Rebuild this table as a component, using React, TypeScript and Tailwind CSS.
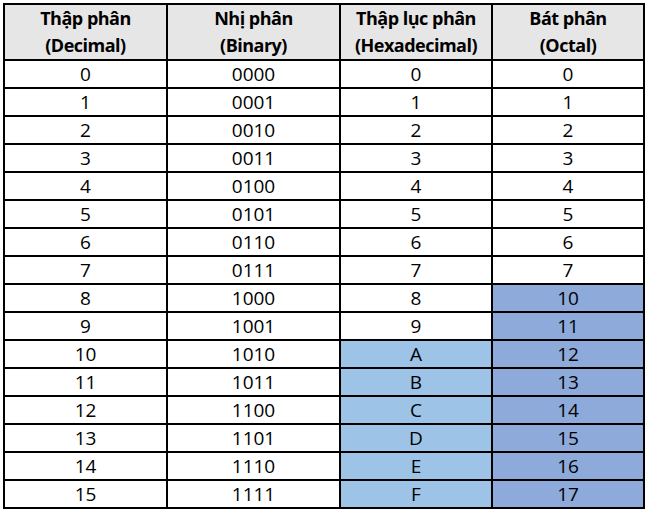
const rows: [string, string, string, string][] = [
  ['0', '0000', '0', '0'],
  ['1', '0001', '1', '1'],
  ['2', '0010', '2', '2'],
  ['3', '0011', '3', '3'],
  ['4', '0100', '4', '4'],
  ['5', '0101', '5', '5'],
  ['6', '0110', '6', '6'],
  ['7', '0111', '7', '7'],
  ['8', '1000', '8', '10'],
  ['9', '1001', '9', '11'],
  ['10', '1010', 'A', '12'],
  ['11', '1011', 'B', '13'],
  ['12', '1100', 'C', '14'],
  ['13', '1101', 'D', '15'],
  ['14', '1110', 'E', '16'],
  ['15', '1111', 'F', '17'],
];

const cell = 'border-2 border-black text-center align-middle p-0';

export default function App() {
  return (
    <div className="pt-[3px] pl-[3px] bg-white min-h-screen font-['Open_Sans',sans-serif] text-[19px] text-black">
      <table className="table-fixed border-collapse w-[640px]">
        <colgroup>
          <col className="w-[163px]" />
          <col className="w-[173px]" />
          <col className="w-[152px]" />
          <col className="w-[152px]" />
        </colgroup>
        <thead>
          <tr className="h-[56px] bg-[#e7e6e6] font-bold text-[18px] tracking-[-0.5px] leading-[27px]">
            <th className={cell}>Thập phân<br />(Decimal)</th>
            <th className={cell}>Nhị phân<br />(Binary)</th>
            <th className={cell}>Thập lục phân<br />(Hexadecimal)</th>
            <th className={cell}>Bát phân<br />(Octal)</th>
          </tr>
        </thead>
        <tbody>
          {rows.map((r, i) => (
            <tr key={i} className="h-[28px] leading-[24px]">
              <td className={cell}>{r[0]}</td>
              <td className={cell}>{r[1]}</td>
              <td className={`${cell} ${i >= 10 ? 'bg-[#9dc3e6]' : ''}`}>{r[2]}</td>
              <td className={`${cell} ${i >= 8 ? 'bg-[#8eaadb]' : ''}`}>{r[3]}</td>
            </tr>
          ))}
        </tbody>
      </table>
    </div>
  );
}
